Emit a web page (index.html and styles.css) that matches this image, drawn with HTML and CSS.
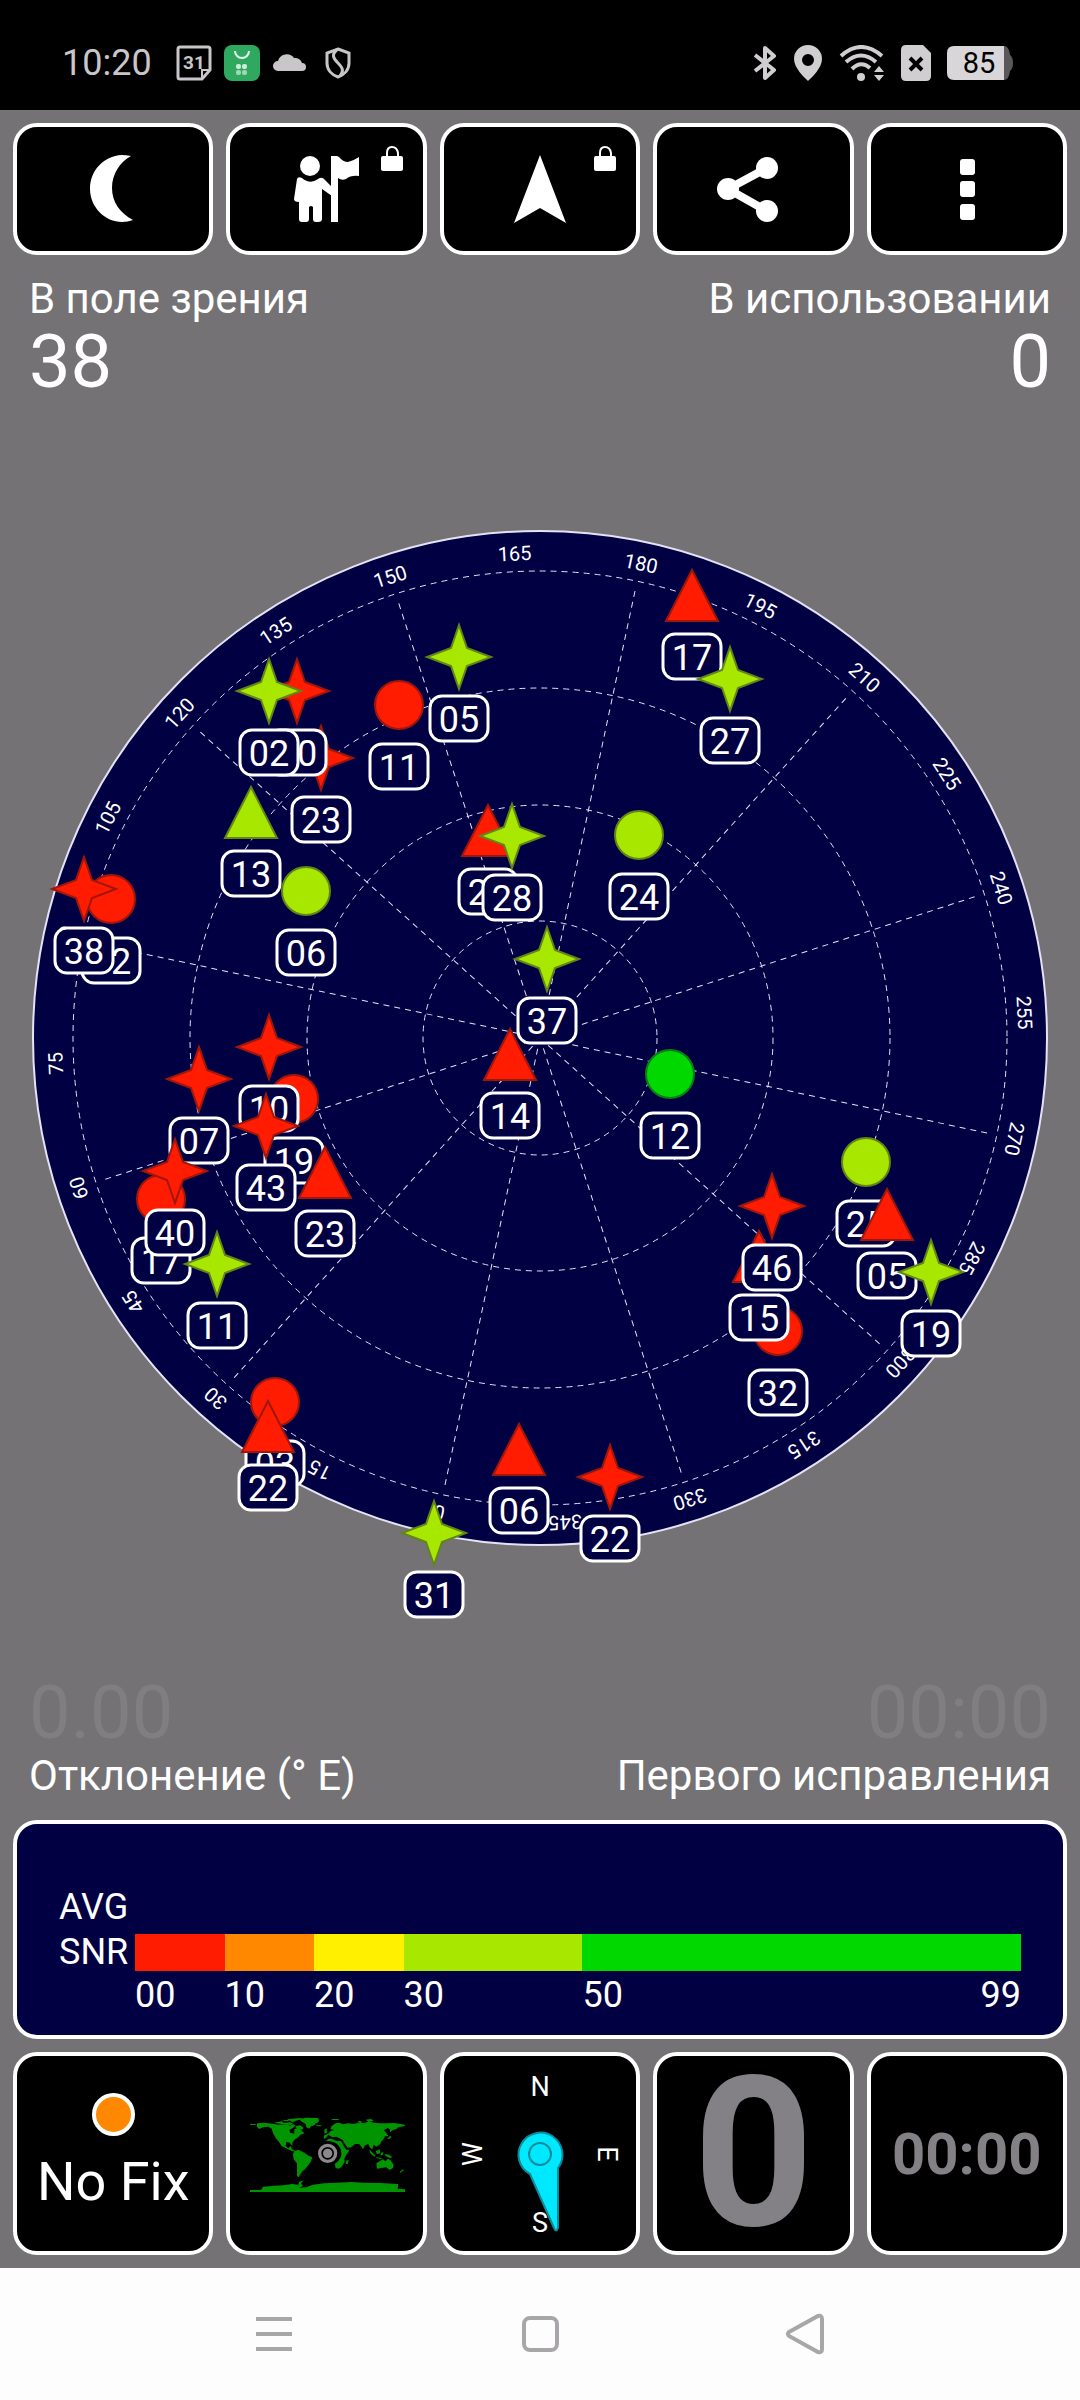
FILE: index.html
```html
<!DOCTYPE html>
<html lang="ru">
<head>
    <meta charset="UTF-8">
    <meta name="viewport" content="width=device-width, initial-scale=1.0">
    <title>GPS</title>
    <link rel="stylesheet" href="styles.css">
</head>
<body>
    <header class="status-bar">
        <span class="time">10:20</span>
        <div class="notifications">
            <svg width="36" height="36" viewBox="0 0 36 36">
                <path d="M4 2H32Q34 2 34 4V25L26 34H4Q2 34 2 32V4Q2 2 4 2Z" fill="none" stroke="#c8c6c8" stroke-width="3"/>
                <path d="M34 25H26V34" fill="none" stroke="#c8c6c8" stroke-width="2"/>
                <text class="calendar-day" x="18" y="24" text-anchor="middle">31</text>
            </svg>
            <svg width="36" height="36" viewBox="0 0 36 36">
                <rect width="36" height="36" rx="8" fill="#2fa860"/>
                <path d="M11 6a7 7 0 0 0 14 0" fill="none" stroke="#e6f5ec" stroke-width="2"/>
                <g fill="#cdebd8">
                    <rect x="12" y="19" width="5" height="5" rx="2"/>
                    <rect x="18" y="19" width="5" height="5" rx="2"/>
                    <rect x="12" y="25" width="5" height="5" rx="2" opacity="0.7"/>
                    <rect x="18" y="25" width="5" height="5" rx="2" opacity="0.7"/>
                </g>
            </svg>
            <svg width="36" height="36" viewBox="0 0 36 36">
                <path d="M6 26a5 5 0 0 1 0-10a9 9 0 0 1 16-3a7 7 0 0 1 8 5a4 4 0 0 1 0 8Z" fill="#c8c6c8"/>
            </svg>
            <svg width="36" height="36" viewBox="0 0 36 36">
                <path d="M18 4L29 8V18C29 25 24 30 18 32C12 30 7 25 7 18V8Z" fill="none" stroke="#c8c6c8" stroke-width="3"/>
                <path d="M18 4C11 9 13 13 18 18S24 26 20 31" fill="none" stroke="#c8c6c8" stroke-width="3"/>
            </svg>
        </div>
        <div class="signals">
            <svg width="24" height="36" viewBox="0 0 24 36">
                <path d="M2 10L21 25L12 33V3L21 11L2 26" fill="none" stroke="#d0ced0" stroke-width="4" stroke-linejoin="round"/>
            </svg>
            <svg width="30" height="36" viewBox="0 0 30 36">
                <path d="M15 0a14 14 0 0 1 14 14C29 23 19 32 15 36C11 32 1 23 1 14A14 14 0 0 1 15 0ZM15 9a6 6 0 1 0 0 12a6 6 0 1 0 0-12Z" fill="#d0ced0"/>
            </svg>
            <svg width="46" height="36" viewBox="0 0 46 36">
                <g fill="none" stroke="#d0ced0" stroke-width="4">
                    <path d="M2 11Q22-7 43 11"/>
                    <path d="M7 17Q22 4 37 17"/>
                    <path d="M13 24Q22 15 31 23"/>
                </g>
                <circle cx="22" cy="32" r="4" fill="#d0ced0"/>
                <path d="M35 27L40 21L45 27ZM35 30H45L40 36Z" fill="#d0ced0"/>
            </svg>
            <svg width="30" height="36" viewBox="0 0 30 36">
                <path d="M5 0H22L30 8V31Q30 36 25 36H5Q0 36 0 31V5Q0 0 5 0Z" fill="#d0ced0"/>
                <path d="M9 13L21 25M21 13L9 25" stroke="#000" stroke-width="4"/>
            </svg>
            <svg width="66" height="36" viewBox="0 0 66 36">
                <path d="M55 1H57Q62 1 63 10Q66 12 66 18T63 26Q62 35 57 35H55Z" fill="#59575a"/>
                <path d="M7 1H57V35H7Q0 35 0 28V8Q0 1 7 1Z" fill="#d8d6d9"/>
                <text class="battery-level" x="32" y="28" text-anchor="middle">85</text>
            </svg>
        </div>
    </header>

    <main class="app">
        <nav class="toolbar">
            <button type="button" class="tile" aria-label="Ночной режим">
                <svg class="icon" viewBox="0 0 68 68"><path d="M52 1Q47 0 43 0C24 1 11 16 11 34S26 67 43 67Q49 67 54 65C41 58 33 47 33 33C33 19 41 7 52 1Z"/></svg>
            </button>
            <button type="button" class="tile" aria-label="Гид">
                <svg class="icon" viewBox="0 0 68 68">
                    <circle cx="17" cy="11" r="10"/>
                    <path d="M4 24Q5 21 9 23Q17 30 25 24Q29 21 32 25L39 32V41L29 34V64Q29 67 25 67H23Q20 67 20 64V52Q18 50 16 52V64Q16 67 13 67H9Q6 67 6 64V47Q1 47 1 44Z"/>
                    <path d="M38 1H44L46 2Q50 7 55 7Q60 6 66 2V21Q58 20 53 24Q49 26 45 23V67H38Z"/>
                </svg>
                <svg class="lock" viewBox="0 0 22 25"><path d="M6 11V7Q6 1 11 1T17 7V11" fill="none" stroke="#fff" stroke-width="2"/><rect y="10" width="22" height="15" rx="2"/></svg>
            </button>
            <button type="button" class="tile" aria-label="Навигация">
                <svg class="icon" viewBox="0 0 68 68"><path d="M34 0L60 68L34 53L8 68Z"/></svg>
                <svg class="lock" viewBox="0 0 22 25"><path d="M6 11V7Q6 1 11 1T17 7V11" fill="none" stroke="#fff" stroke-width="2"/><rect y="10" width="22" height="15" rx="2"/></svg>
            </button>
            <button type="button" class="tile" aria-label="Поделиться">
                <svg class="icon" viewBox="0 0 68 68">
                    <path d="M48 13L9 34L48 56" fill="none" stroke="#fff" stroke-width="8"/>
                    <circle cx="9" cy="34" r="11"/><circle cx="48" cy="13" r="11"/><circle cx="48" cy="56" r="11"/>
                </svg>
            </button>
            <button type="button" class="tile" aria-label="Меню">
                <svg class="icon" viewBox="0 0 68 68"><rect x="27" y="4" width="15" height="16" rx="3"/><rect x="27" y="26" width="15" height="16" rx="3"/><rect x="27" y="49" width="15" height="16" rx="3"/></svg>
            </button>
        </nav>

        <section class="readouts">
            <div class="readout">
                <span class="label">В поле зрения</span>
                <span class="value">38</span>
            </div>
            <div class="readout right">
                <span class="label">В использовании</span>
                <span class="value">0</span>
            </div>
        </section>

        <section class="sky">
            <svg class="dial" viewBox="-540 -600 1080 1200">
                <circle class="dial-face" r="507"/>
                <g class="grid-lines">
                    <circle r="117"/>
                    <circle r="233"/>
                    <circle r="350"/>
                    <circle r="467"/>
                </g>
                <g class="grid-lines" id="spokes"></g>
                <g class="bearings" id="bearings"></g>
                <g id="satellites"></g>
            </svg>
        </section>

        <section class="readouts">
            <div class="readout">
                <span class="value dim">0.00</span>
                <span class="label">Отклонение (° E)</span>
            </div>
            <div class="readout right">
                <span class="value dim">00:00</span>
                <span class="label">Первого исправления</span>
            </div>
        </section>

        <section class="snr">
            <span class="snr-name">AVG</span>
            <span></span>
            <span class="snr-name">SNR</span>
            <div class="scale">
                <span class="ten red"></span>
                <span class="ten orange"></span>
                <span class="ten yellow"></span>
                <span class="twenty lime"></span>
                <span class="rest green"></span>
            </div>
            <span></span>
            <div class="ticks">
                <span class="ten">00</span>
                <span class="ten">10</span>
                <span class="ten">20</span>
                <span class="twenty">30</span>
                <span class="rest"><span>50</span><span>99</span></span>
            </div>
        </section>

        <section class="widgets">
            <button type="button" class="tile fix">
                <span class="lamp"></span>
                <span>No Fix</span>
            </button>
            <button type="button" class="tile" aria-label="Карта">
                <svg class="map" viewBox="0 0 540 322">
                    <g fill="#009400">
                        <path d="M60 70L82 68L112 72L124 74L150 73L160 78L166 72L176 76L168 84L157 90L160 98L172 101L172 88L184 83L192 90L202 100L190 104L184 111L172 120L166 128L166 138L158 128L148 126L146 138L154 145L160 138L166 148L174 153L166 154L150 146L134 138L126 126L116 114L108 99L104 86L94 80L80 81L66 87L60 80Z"/>
                        <path d="M39 72H56V75H39ZM112 68L134 64L140 69L160 67L168 71L160 75L138 73ZM130 61L156 59L154 64ZM150 58L190 54L198 57L176 62L168 67Z"/>
                        <path d="M188 58L206 53L244 54L246 66L236 70L232 76L222 79L216 86L208 82L206 72L192 64Z"/>
                        <path d="M176 78L190 76L200 84L194 90L186 86L178 84Z"/>
                        <path d="M172 153L184 149L202 158L212 166L226 172L222 184L214 196L204 208L196 214L188 226L186 232L180 228L180 208L180 190L170 178L168 162Z"/>
                        <path d="M238 76H253V79H238ZM284 57H305V60H284ZM360 66L368 62L376 66L372 69ZM386 59L402 57L410 62L396 66Z"/>
                        <path d="M262 89L269 84L270 98L262 101ZM262 106L276 100L280 93L292 90L280 87L284 78L296 70L308 68L318 73L334 70L350 72L366 68L382 70L396 64L410 68L430 70L450 70L472 69L504 74L502 79L484 82L478 87L466 91L460 97L458 88L452 84L440 91L448 98L454 108L444 109L440 116L432 126L430 132L418 140L410 134L406 148L398 142L394 132L384 136L378 148L372 138L366 132L354 132L342 142L332 143L322 130L318 121L306 114L298 110L286 112L274 104L266 115L260 116Z"/>
                        <path d="M266 124L274 116L284 116L298 122L312 123L320 138L328 149L338 149L328 164L322 176L323 186L314 200L304 206L296 204L293 192Q320 175 311 148Q302 126 278 124Z"/>
                        <path d="M336 180L332 192L326 192L328 182ZM396 148L408 160L416 168L412 170L400 160ZM416 154L428 148L430 160L420 163ZM432 158L440 156L436 166L430 166ZM442 162L456 164L466 172L458 174L446 168ZM418 172L434 174L434 177L418 175ZM458 108L464 110L458 116L450 118ZM498 208L501 211L490 218L488 216Z"/>
                        <path d="M418 190L430 182L438 178L446 184L452 176L460 180L470 194L468 204L458 210L448 202L434 204L420 206Z"/>
                        <path d="M39 270H72L78 260L106 258L138 256L166 252L184 254L186 246L200 240L192 250L198 258L186 263L208 262L228 254L262 250L300 248L344 246L380 248L430 249L484 252L482 266L504 268V276H39Z"/>
                    </g>
                    <circle cx="272" cy="160" r="36" fill="#000"/>
                    <circle cx="272" cy="160" r="24" fill="none" stroke="#8b898c" stroke-width="10"/>
                    <circle cx="272" cy="160" r="14" fill="#8b898c"/>
                </svg>
            </button>
            <button type="button" class="tile" aria-label="Компас">
                <svg class="compass" viewBox="-100 -101 200 202">
                    <text y="-58">N</text>
                    <text y="-58" transform="rotate(90)">E</text>
                    <text y="-58" transform="rotate(-90)">W</text>
                    <text y="78">S</text>
                    <path class="needle" d="M-10 20A22 22 0 1 1 18 14V74Q16 79 14 74Z"/>
                    <circle class="needle" r="11"/>
                </svg>
            </button>
            <button type="button" class="tile big">0</button>
            <button type="button" class="tile clock">00:00</button>
        </section>
    </main>

    <footer class="nav-bar">
        <button type="button" class="nav-button" aria-label="Недавние">
            <svg width="36" height="40" viewBox="0 0 36 40"><path d="M0 5H36M0 20H36M0 35H36"/></svg>
        </button>
        <button type="button" class="nav-button" aria-label="Домой">
            <svg width="36" height="40" viewBox="0 0 36 40"><rect x="2" y="4" width="33" height="32" rx="6"/></svg>
        </button>
        <button type="button" class="nav-button" aria-label="Назад">
            <svg width="36" height="40" viewBox="0 0 36 40"><path d="M1 18L30 2Q34 1 34 5V35Q34 39 30 38L1 22Q-1 20 1 18Z"/></svg>
        </button>
    </footer>

    <script src="script.js"></script>
</body>
</html>
```
FILE: styles.css
```css
* {
    box-sizing: border-box;
}
body {
    font-family: Roboto, "Noto Sans", sans-serif;
    margin: 0;
    min-height: 100vh;
    display: flex;
    flex-direction: column;
    background-color: #747275;
    color: #fff;
}
button {
    font-family: inherit;
    color: inherit;
    cursor: pointer;
}
svg {
    display: block;
}

/* status bar */
.status-bar {
    display: flex;
    align-items: center;
    gap: 24px;
    height: 110px;
    padding: 16px 67px 0 62px;
    background: #000;
    color: #c8c6c8;
}
.time {
    font-size: 36px;
}
.notifications {
    display: flex;
    gap: 12px;
}
.signals {
    display: flex;
    gap: 16px;
    margin-left: auto;
}
.calendar-day {
    font-size: 19px;
    font-weight: bold;
    fill: #c8c6c8;
}
.battery-level {
    font-size: 29px;
    fill: #000;
}

/* app */
.app {
    flex: 1;
    display: flex;
    flex-direction: column;
    padding: 13px;
}
.toolbar,
.widgets {
    display: grid;
    grid-template-columns: repeat(5, 1fr);
    gap: 13px;
}
.tile {
    position: relative;
    display: flex;
    flex-direction: column;
    align-items: center;
    justify-content: center;
    min-width: 0;
    height: 132px;
    padding: 0;
    background: #000;
    border: 4px solid #fff;
    border-radius: 24px;
}
.icon {
    width: 68px;
    height: 68px;
    fill: #fff;
    overflow: visible;
}
.lock {
    position: absolute;
    top: 19px;
    right: 20px;
    width: 22px;
    height: 25px;
    fill: #fff;
}

.readouts {
    display: flex;
    justify-content: space-between;
    padding: 20px 16px;
}
.readout {
    display: flex;
    flex-direction: column;
}
.right {
    text-align: right;
}
.label {
    font-size: 42px;
    line-height: 48px;
}
.value {
    font-size: 74px;
    line-height: 78px;
}
.dim {
    color: #807e81;
}

/* sky view */
.sky {
    flex: 1;
    display: flex;
    align-items: center;
    margin: 0 -13px;
}
.dial {
    width: 100%;
}
.dial-face {
    fill: #000042;
    stroke: #e4e2f4;
    stroke-width: 2;
}
.grid-lines {
    fill: none;
    stroke: #e4e4f4;
    stroke-width: 1;
    stroke-dasharray: 6 5;
}
.bearings {
    font-size: 20px;
    fill: #fff;
    text-anchor: middle;
}
.marker {
    stroke-width: 2;
}
.marker.red {
    fill: #ff1c00;
    stroke: #a0160c;
}
.marker.lime {
    fill: #a8e800;
    stroke: #61851a;
}
.marker.green {
    fill: #00d800;
    stroke: #0b7d18;
}
.tag {
    fill: #000042;
    stroke: #fff;
    stroke-width: 3;
}
.tag-text {
    font-size: 36px;
    fill: #fff;
    text-anchor: middle;
}

/* signal scale */
.snr {
    display: grid;
    grid-template-columns: 76px 1fr;
    grid-template-rows: 44px 42px 40px;
    row-gap: 2px;
    align-content: end;
    align-items: center;
    height: 219px;
    margin-bottom: 13px;
    padding: 0 42px 20px 42px;
    background: #000042;
    border: 4px solid #fff;
    border-radius: 24px;
    font-size: 36px;
    line-height: 40px;
}
.scale,
.ticks {
    display: flex;
}
.scale > span {
    height: 37px;
}
.ten {
    flex: 10 0 0;
}
.twenty {
    flex: 20 0 0;
}
.rest {
    flex: 49 0 0;
    display: flex;
    justify-content: space-between;
}
.scale .red {
    background: #ff1c00;
}
.scale .orange {
    background: #ff8800;
}
.scale .yellow {
    background: #fff000;
}
.scale .lime {
    background: #a8e800;
}
.scale .green {
    background: #00d800;
}

/* bottom tiles */
.widgets .tile {
    height: 203px;
}
.fix {
    font-size: 54px;
    line-height: 64px;
    gap: 14px;
}
.lamp {
    width: 43px;
    height: 43px;
    background: #ff8800;
    border: 4px solid #fff;
    border-radius: 50%;
}
.map {
    width: 180px;
}
.compass {
    width: 200px;
    font-size: 27px;
    fill: #fff;
    text-anchor: middle;
    flex-shrink: 0;
}
.needle {
    fill: #00e8ff;
    stroke: #0a8c9c;
    stroke-width: 2;
}
.big {
    font-size: 210px;
    line-height: 195px;
    font-weight: bold;
}
.clock {
    font-size: 58px;
    font-weight: bold;
}
.big,
.clock {
    color: #838185;
}

/* system navigation */
.nav-bar {
    display: flex;
    align-items: center;
    justify-content: center;
    gap: 230px;
    height: 132px;
    background: #fefdfe;
}
.nav-button {
    padding: 0;
    border: none;
    background: none;
}
.nav-button svg {
    fill: none;
    stroke: #a8a6a9;
    stroke-width: 4;
    overflow: visible;
}
```
FILE: script.js
```js
const SVG_NS = 'http://www.w3.org/2000/svg';
const HEADING = 168;

// shape, colour, x, y, id (later entries are drawn on top)
const satellites = [
    ['star', 'lime', -81, -381, '05'],
    ['star', 'red', -219, -280, '23'],
    ['star', 'red', -243, -347, '20'],
    ['star', 'lime', -271, -347, '02'],
    ['circle', 'red', -141, -333, '11'],
    ['triangle', 'lime', -289, -226, '13'],
    ['circle', 'lime', -234, -147, '06'],
    ['circle', 'red', -429, -139, '02'],
    ['star', 'red', -456, -149, '38'],
    ['triangle', 'red', -52, -208, '21'],
    ['star', 'lime', -28, -202, '28'],
    ['circle', 'lime', 99, -203, '24'],
    ['triangle', 'red', 152, -443, '17'],
    ['star', 'lime', 190, -359, '27'],
    ['star', 'lime', 7, -79, '37'],
    ['triangle', 'red', -30, 16, '14'],
    ['circle', 'red', -246, 61, '19'],
    ['star', 'red', -271, 9, '10'],
    ['star', 'red', -274, 88, '43'],
    ['triangle', 'red', -215, 134, '23'],
    ['star', 'red', -341, 41, '07'],
    ['circle', 'red', -379, 161, '17'],
    ['star', 'red', -365, 133, '40'],
    ['star', 'lime', -323, 226, '11'],
    ['circle', 'red', -265, 364, '03'],
    ['triangle', 'red', -272, 388, '22'],
    ['triangle', 'red', -21, 411, '06'],
    ['star', 'lime', -106, 495, '31'],
    ['circle', 'green', 130, 36, '12'],
    ['circle', 'lime', 326, 124, '25'],
    ['triangle', 'red', 347, 176, '05'],
    ['star', 'lime', 391, 234, '19'],
    ['circle', 'red', 238, 293, '32'],
    ['triangle', 'red', 219, 218, '15'],
    ['star', 'red', 232, 168, '46'],
    ['star', 'red', 70, 439, '22']
];

const shapes = {
    star: 'M0 -32L8 -9L32 0L8 9L0 32L-8 9L-32 0L-8 -9Z',
    triangle: 'M0 -25L26 26H-26Z',
    circle: 'M-24 0A24 24 0 1 1 24 0A24 24 0 1 1 -24 0Z'
};

function add(parent, name, attrs, text) {
    const el = document.createElementNS(SVG_NS, name);
    for (const key in attrs) {
        el.setAttribute(key, attrs[key]);
    }
    if (text) {
        el.textContent = text;
    }
    parent.appendChild(el);
    return el;
}

const spokes = document.getElementById('spokes');
const bearings = document.getElementById('bearings');
for (let deg = 0; deg < 360; deg += 15) {
    const turn = `rotate(${deg - HEADING})`;
    if (deg % 30 === 0) {
        add(spokes, 'line', { y1: 0, y2: -462, transform: turn });
    }
    add(bearings, 'text', { y: -478, transform: turn }, String(deg));
}

const layer = document.getElementById('satellites');
for (const [shape, colour, x, y, id] of satellites) {
    const sat = add(layer, 'g', { transform: `translate(${x} ${y})` });
    add(sat, 'path', { class: `marker ${colour}`, d: shapes[shape] });
    add(sat, 'rect', { class: 'tag', x: -29, y: 39, width: 58, height: 45, rx: 12 });
    add(sat, 'text', { class: 'tag-text', y: 75 }, id);
}
```
